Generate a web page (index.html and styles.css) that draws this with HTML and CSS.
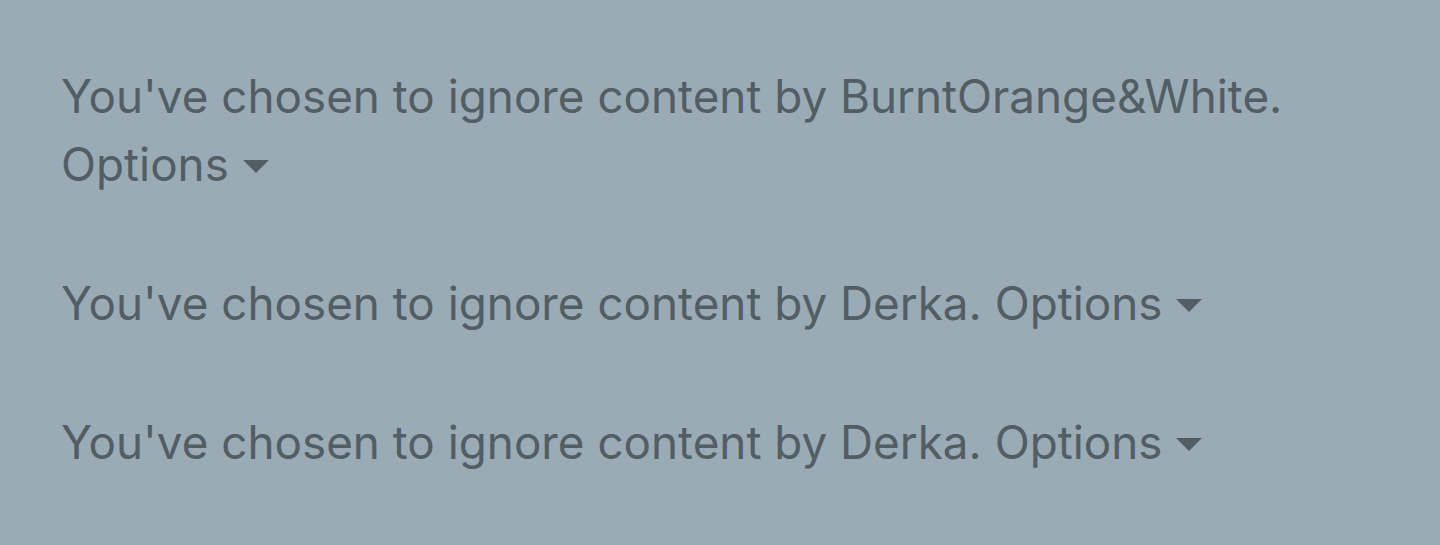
FILE: index.html
```html
<!DOCTYPE html>
<html lang="en">
<head>
    <meta charset="UTF-8">
    <meta name="viewport" content="width=device-width, initial-scale=1.0">
    <title>Ignored content</title>
    <link rel="stylesheet" href="styles.css">
</head>
<body>

    <div class="ignored-list">
        <div class="ignored">
            You've chosen to ignore content by BurntOrange&amp;White.
            <a class="options">Options<span class="caret"></span></a>
        </div>
        <div class="ignored">
            You've chosen to ignore content by Derka.
            <a class="options">Options<span class="caret"></span></a>
        </div>
        <div class="ignored">
            You've chosen to ignore content by Derka.
            <a class="options">Options<span class="caret"></span></a>
        </div>
    </div>

</body>
</html>
```

FILE: styles.css
```css
body {
    margin: 0;
    background: #9aabb6;
    font-family: Inter, "Noto Sans", sans-serif;
    color: #525d64;
}
.ignored-list {
    padding: 63px 62px 0 61px;
    display: flex;
    flex-direction: column;
    gap: 71px;
}
.ignored {
    font-size: 45.8px;
    line-height: 68px;
}
.options {
    white-space: nowrap;
}
.caret { /* small filled triangle after Options */
    display: inline-block;
    width: 0;
    height: 0;
    margin-left: 14px;
    border-left: 13px solid transparent;
    border-right: 13px solid transparent;
    border-top: 13px solid #525d64;
    vertical-align: 0.17em;
}
```
